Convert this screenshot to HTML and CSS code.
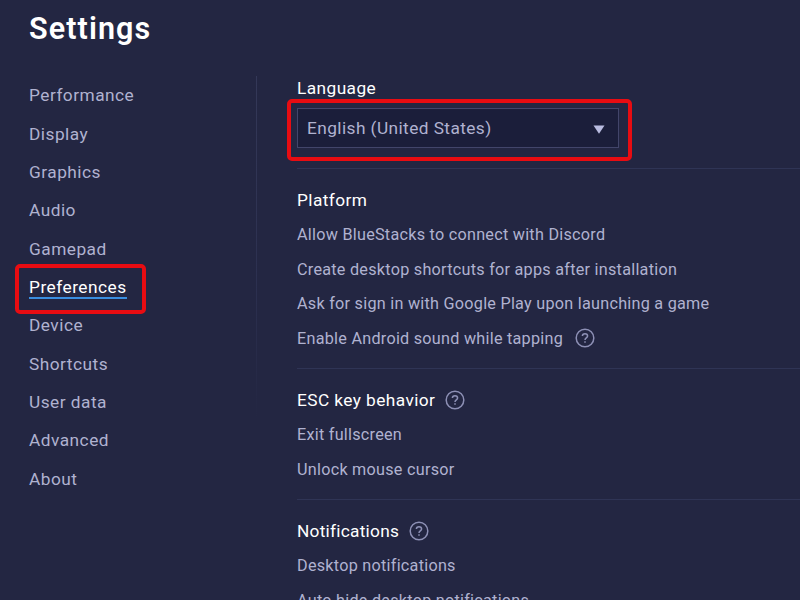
FILE: index.html
```
<!DOCTYPE html>
<html lang="en">
<head>
  <meta charset="UTF-8">
  <meta name="viewport" content="width=device-width, initial-scale=1.0">
  <title>Settings</title>

  <link rel="stylesheet" href="styles.css">
</head>
<body>
  <svg class="sprite">
    <symbol id="help" viewBox="0 0 20 20">
      <circle cx="10" cy="10" r="8.8"/>
      <path d="M7.4 8.1C7.4 6.6 8.5 5.7 10 5.7s2.6.9 2.6 2.3c0 1.8-2.6 2-2.6 3.9M10 13.3v1.5"/>
    </symbol>
  </svg>

  <div class="settings">
    <h1 class="title"><span>Settings</span></h1>

    <div class="container">
      <nav class="sidebar">
        <a class="option"><span>Performance</span></a>
        <a class="option"><span>Display</span></a>
        <a class="option"><span>Graphics</span></a>
        <a class="option"><span>Audio</span></a>
        <a class="option"><span>Gamepad</span></a>
        <a class="option selected"><span>Preferences</span></a>
        <a class="option"><span>Device</span></a>
        <a class="option"><span>Shortcuts</span></a>
        <a class="option"><span>User data</span></a>
        <a class="option"><span>Advanced</span></a>
        <a class="option"><span>About</span></a>
      </nav>

      <main class="content">
        <section class="section language">
          <h2>Language</h2>
          <div class="select">
            <span>English (United States)</span>
            <svg class="arrow" viewBox="0 0 12 9"><path d="M.5.5h11L6 8.7z"/></svg>
          </div>
        </section>

        <section class="section">
          <h2>Platform</h2>
          <div class="row">Allow BlueStacks to connect with Discord</div>
          <div class="row">Create desktop shortcuts for apps after installation</div>
          <div class="row">Ask for sign in with Google Play upon launching a game</div>
          <div class="row">Enable Android sound while tapping <svg class="help"><use href="#help"/></svg></div>
        </section>

        <section class="section">
          <h2>ESC key behavior <svg class="help"><use href="#help"/></svg></h2>
          <div class="row">Exit fullscreen</div>
          <div class="row">Unlock mouse cursor</div>
        </section>

        <section class="section notifications">
          <h2>Notifications <svg class="help"><use href="#help"/></svg></h2>
          <div class="row">Desktop notifications</div>
          <div class="row">Auto hide desktop notifications</div>
        </section>
      </main>
    </div>
  </div>
</body>
</html>
```

FILE: styles.css
```
*, *::after {
  box-sizing: border-box;
}

body {
  margin: 0;
  background: #232642;
  color: #b0b2d0;
  font-family: Roboto, "Liberation Sans", sans-serif;
}

h1, h2 {
  margin: 0;
  color: #fff;
}

.sprite {
  display: none;
}

.settings {
  height: 600px;
  overflow: hidden;
}

.title {
  height: 57px;
  padding-left: 29px;
  font-size: 30.5px;
  line-height: 57px;
  font-weight: 600;
  letter-spacing: 1.1px;
}

.container {
  display: flex;
}

.sidebar {
  width: 257px;
  height: 345px;
  margin-top: 19px;
  padding-left: 29px;
  border-right: 1px solid;
  border-image: linear-gradient(#343858, #2c3050 60%, #232642) 1;
}

.option {
  position: relative;
  display: flex;
  align-items: center;
  height: 38.35px;
  font-size: 17.3px;
  letter-spacing: .48px;
}

.selected {
  color: #fff;
}

.selected span {
  padding-top: 2px;
  border-bottom: 2px solid #3a8ee0;
}

/* highlight frames */
.selected::after,
.select::after {
  content: "";
  position: absolute;
  border: 4px solid #e80c12;
  border-radius: 5px;
}

.selected::after {
  top: -4px;
  left: -14px;
  width: 131px;
  height: 50px;
}

.select::after {
  top: -10px;
  left: -11px;
  width: 345px;
  height: 62px;
}

.content {
  flex: 1;
  padding-left: 40px;
}

.section {
  padding: 13px 0 12.4px;
  border-bottom: 1px solid #2f3455;
}

.section h2 {
  display: flex;
  align-items: center;
  height: 35.4px;
  font-size: 17.3px;
  font-weight: 400;
  letter-spacing: .42px;
}

.row {
  display: flex;
  align-items: center;
  height: 34.6px;
  font-size: 16.2px;
  letter-spacing: .26px;
}

.row .help {
  margin-left: 12px;
}

.language {
  padding: 13px 0 20px;
}

.notifications h2 {
  letter-spacing: .25px;
}

.select {
  position: relative;
  display: flex;
  align-items: center;
  justify-content: space-between;
  width: 322px;
  height: 40px;
  margin-top: 2.6px;
  padding: 0 13px 0 9px;
  background: #1b1e3a;
  border: 1px solid #42456a;
  font-size: 17.3px;
  letter-spacing: .42px;
}

.arrow {
  width: 12px;
  height: 9px;
  margin-top: 3px;
  fill: #b9bce0;
}

.help {
  width: 20px;
  height: 20px;
  margin-left: 10px;
  fill: none;
  stroke: #8d90b5;
  stroke-width: 1.5;
}
```
